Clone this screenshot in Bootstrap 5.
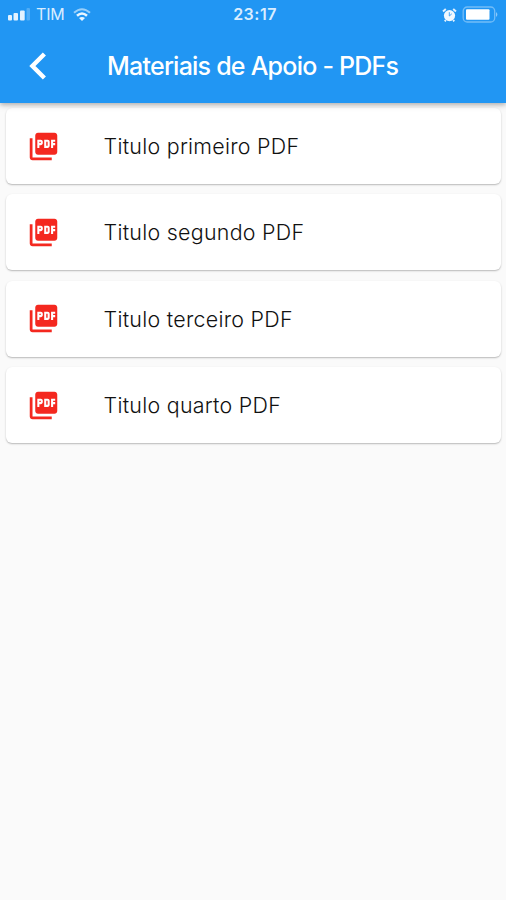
<!DOCTYPE html>
<html lang="pt-BR">
<head>
<meta charset="utf-8">
<meta name="viewport" content="width=device-width, initial-scale=1">
<title>Materiais de Apoio - PDFs</title>
<link href="https://cdn.jsdelivr.net/npm/bootstrap@5.3.0/dist/css/bootstrap.min.css" rel="stylesheet">
<style>
body{font-family:Inter,"Liberation Sans",sans-serif;background:#fafafa;min-height:100vh;overflow-x:hidden}
svg{display:block;flex:none}
.app-header{background:#2196f3;height:103px;box-shadow:0 2px 4px rgba(0,0,0,.2),0 3px 7px rgba(0,0,0,.1);z-index:2}
.status-row{display:grid;grid-template-columns:1fr auto 1fr;height:29px;padding:0 6px 0 8px;color:#d9edff;font-size:16px;line-height:29px}
.carrier{letter-spacing:-.2px;margin:0 9px 0 6px}
.clock{font-weight:600;letter-spacing:.5px;padding-left:2px}
.title-row{height:74px;padding-left:29px}
.page-title{font-size:25px;font-weight:500;letter-spacing:-.77px;line-height:74px;margin-left:61px;white-space:nowrap}
.pdf-list{padding:5px 5px 0 6px;gap:10.4px}
.pdf-card{height:76px;border:0;border-radius:6px;box-shadow:0 1px 2px rgba(0,0,0,.22),0 1px 1px rgba(0,0,0,.06);padding-left:21px}
.pdf-title{font-size:21.4px;font-weight:300;letter-spacing:.28px;color:#111;margin-left:43.5px;line-height:32px;white-space:nowrap}
</style>
</head>
<body>
<svg width="0" height="0" class="position-absolute" aria-hidden="true">
<symbol id="pdf" viewBox="0 0 24 24"><path d="M20 2H8c-1.1 0-2 .9-2 2v12c0 1.1.9 2 2 2h12c1.1 0 2-.9 2-2V4c0-1.1-.9-2-2-2zm-8.5 7.5c0 .83-.67 1.5-1.5 1.5H9v2H7.5V7H10c.83 0 1.5.67 1.5 1.5v1zm5 2c0 .83-.67 1.5-1.5 1.5h-2.5V7H15c.83 0 1.5.67 1.5 1.5v3zm4-3H19v1h1.5V11H19v2h-1.5V7h3v1.5zM9 9.5h1v-1H9v1zM4 6H2v14c0 1.1.9 2 2 2h14v-2H4V6zm10 5.5h1v-3h-1v3z" fill="#f4281f"/></symbol>
</svg>
<header class="app-header position-relative">
  <div class="status-row">
    <div class="d-flex align-items-center">
      <svg width="22" height="13" viewBox="0 0 22 13" fill="#e3f2ff"><rect x="0" y="7" width="4" height="5.5" rx="1"/><rect x="5.5" y="5" width="4.5" height="7.5" rx="1"/><rect x="12" y="2.5" width="4.7" height="10" rx="1"/><rect x="18.5" y="0" width="3.5" height="12.5" rx="1" opacity=".25"/></svg>
      <span class="carrier">TIM</span>
      <svg width="18" height="13" viewBox="0 0 18 13" fill="none" stroke="#e8f5ff"><path d="M1 4.7Q9-2.3 17 4.7" stroke-width="2" opacity=".6"/><path d="M4 7.7Q9 3.2 14 7.7" stroke-width="2.5"/><path d="M6 10.1Q9 7.8 12 10.1L9 12.9Z" fill="#e8f5ff" stroke="none"/></svg>
    </div>
    <span class="clock">23:17</span>
    <div class="d-flex align-items-center justify-content-end">
      <svg width="15" height="14" viewBox="0 0 15 14"><circle cx="7.5" cy="7.6" r="5.6" fill="#f0f8ff"/><path d="M1 3.4 3.8 1M14 3.4 11.2 1M3.8 12l-1 1.3M11.2 12l1 1.3" stroke="#e0f1ff" stroke-width="2"/><path d="M7.3 8V4.2M7.3 8 9.8 5.8" fill="none" stroke="#4ba7f4" stroke-width="1"/></svg>
      <svg class="ms-1" width="39" height="17" viewBox="0 0 39 17"><rect x="2.2" y="1" width="31.5" height="15" rx="4" fill="none" stroke="#73bdf8" stroke-width="1.3"/><rect x="5" y="3.3" width="23.5" height="10.4" rx="1" fill="#fff"/><path d="M35 6v5q2.8-2.5 0-5Z" fill="#8bc8fa"/></svg>
    </div>
  </div>
  <div class="title-row d-flex align-items-center">
    <svg width="17" height="28" viewBox="0 0 17 28" fill="none" stroke="#fff" stroke-width="4.4"><path d="M15.4 2 3.4 14l12 12"/></svg>
    <h1 class="page-title text-white mb-0">Materiais de Apoio - PDFs</h1>
  </div>
</header>
<main class="pdf-list d-flex flex-column">
  <div class="pdf-card card flex-row align-items-center"><svg width="33" height="33"><use href="#pdf"/></svg><span class="pdf-title">Titulo primeiro PDF</span></div>
  <div class="pdf-card card flex-row align-items-center"><svg width="33" height="33"><use href="#pdf"/></svg><span class="pdf-title">Titulo segundo PDF</span></div>
  <div class="pdf-card card flex-row align-items-center"><svg width="33" height="33"><use href="#pdf"/></svg><span class="pdf-title">Titulo terceiro PDF</span></div>
  <div class="pdf-card card flex-row align-items-center"><svg width="33" height="33"><use href="#pdf"/></svg><span class="pdf-title">Titulo quarto PDF</span></div>
</main>
<script src="https://cdn.jsdelivr.net/npm/bootstrap@5.3.0/dist/js/bootstrap.bundle.min.js"></script>
</body>
</html>
